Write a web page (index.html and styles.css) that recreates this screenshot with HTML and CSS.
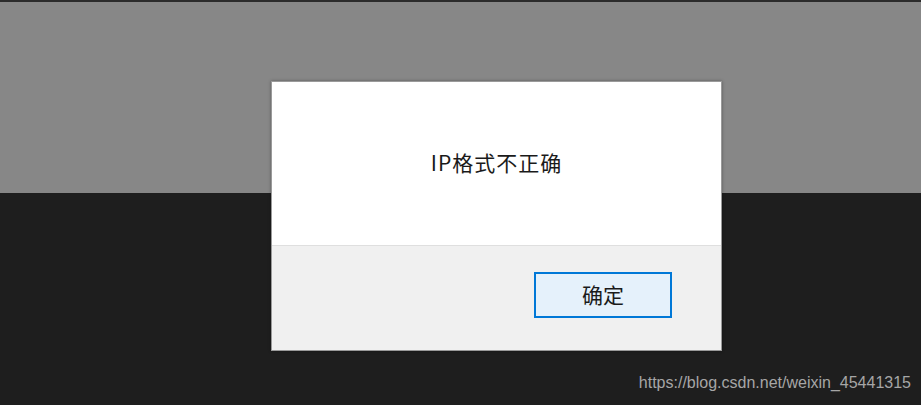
FILE: index.html
```html
<!DOCTYPE html>
<html lang="zh-CN">
<head>
<meta charset="utf-8">
<link rel="stylesheet" href="styles.css">
</head>
<body>
<div class="page">
  <div class="topband"></div>
  <div class="darkarea"></div>
</div>
<div class="dialog">
  <div class="dialog-body">
    <p class="message">IP格式不正确</p>
  </div>
  <div class="dialog-footer">
    <button class="btn-ok">确定</button>
  </div>
</div>
<div class="watermark">https://blog.csdn.net/weixin_45441315</div>
</body>
</html>
```

FILE: styles.css
```css
html, body {
  margin: 0;
  padding: 0;
  width: 921px;
  height: 405px;
  overflow: hidden;
  background: #1e1e1e;
}

.page {
  display: flex;
  flex-direction: column;
  height: 405px;
}

.topband {
  height: 191px;
  border-top: 2px solid #2b2b2b;
  background: #878787;
}

.darkarea {
  flex: 1;
  background: #1e1e1e;
}

.dialog {
  position: absolute;
  left: 271px;
  top: 81px;
  width: 449px;
  height: 268px;
  border: 1px solid #9a9a9a;
  box-shadow: 0 0 3px rgba(0,0,0,0.35);
  display: flex;
  flex-direction: column;
  font-family: "Noto Sans CJK SC", "Microsoft YaHei", sans-serif;
  color: #1a1a1a;
}

.dialog-body {
  height: 163px;
  background: #ffffff;
  border-bottom: 1px solid #dfdfdf;
  display: flex;
  align-items: center;
  justify-content: center;
}

.message {
  margin: 0 0 3px 0;
  font-size: 21px;
  letter-spacing: 1px;
}

.dialog-footer {
  flex: 1;
  background: #f0f0f0;
  display: flex;
  align-items: flex-start;
  justify-content: flex-end;
  padding: 26px 49px 0 0;
}

.btn-ok {
  width: 138px;
  height: 46px;
  background: #e5f1fb;
  border: 2px solid #0078d7;
  font-family: "Noto Sans CJK SC", "Microsoft YaHei", sans-serif;
  font-size: 21px;
  line-height: 1;
  color: #1a1a1a;
  padding: 0 0 2px 0;
}

.watermark {
  position: absolute;
  right: 10px;
  top: 374px;
  font-family: "Liberation Sans", Arial, sans-serif;
  font-size: 16px;
  color: #a6a6a6;
  white-space: nowrap;
}
```
